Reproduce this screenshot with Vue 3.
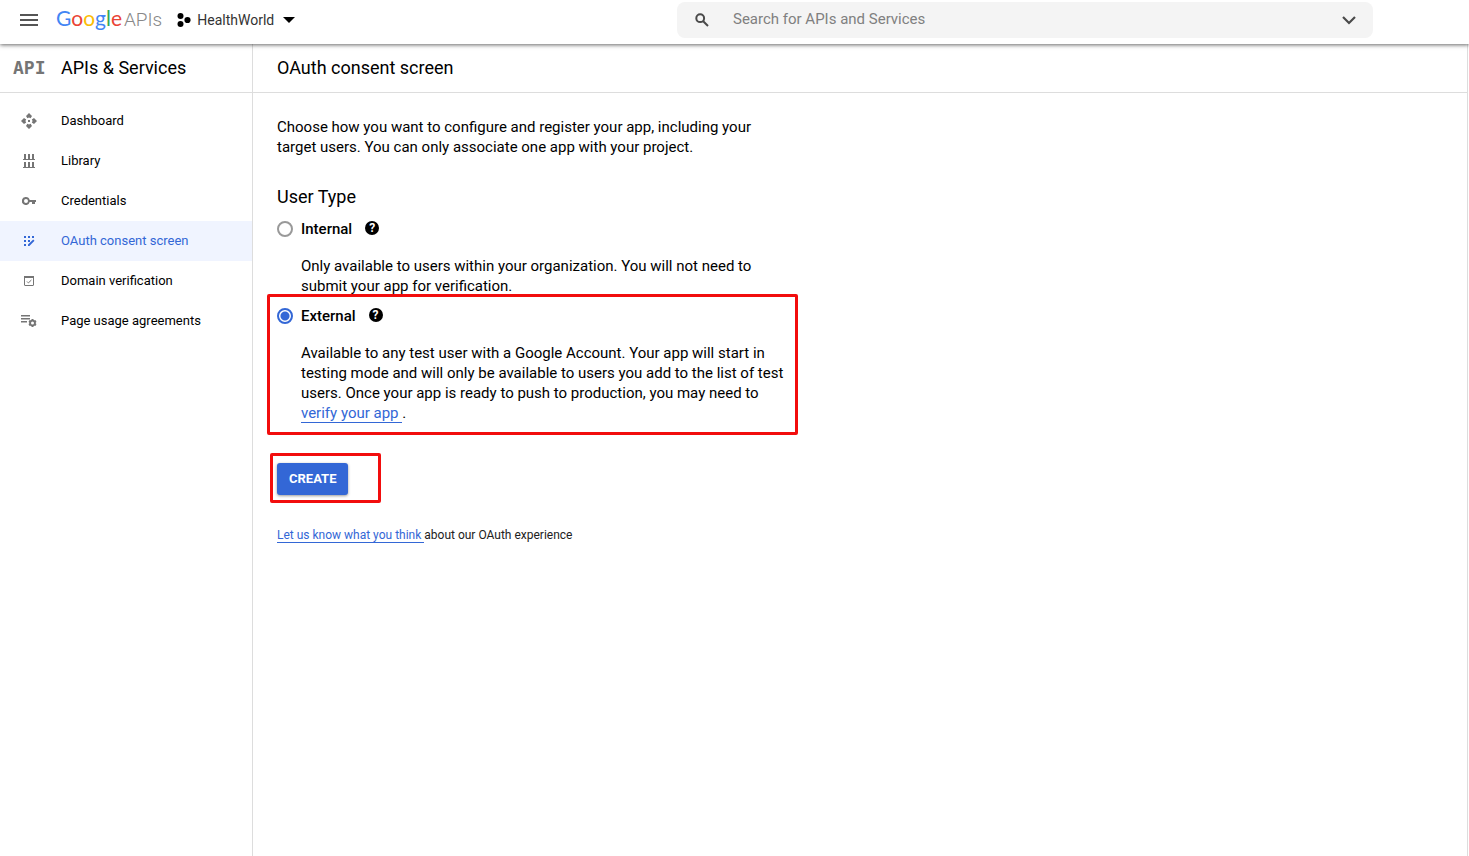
<script setup>
import { ref } from 'vue'

const userType = ref('external')
const query = ref('')
const nav = [
  { id: 'dashboard', label: 'Dashboard' },
  { id: 'library', label: 'Library' },
  { id: 'credentials', label: 'Credentials' },
  { id: 'consent', label: 'OAuth consent screen' },
  { id: 'domain', label: 'Domain verification' },
  { id: 'agreements', label: 'Page usage agreements' },
]
const active = ref('consent')
</script>

<template>
  <div class="page">
    <header class="topbar">
      <div class="brand">
        <button class="icon-btn menu" type="button" aria-label="Main menu">
          <svg width="18" height="12" viewBox="0 0 18 12"><path d="M0 0h18v2H0zM0 5h18v2H0zM0 10h18v2H0z" /></svg>
        </button>
        <a class="logo" href="#"><span class="google"><span class="b">G</span><span class="r">o</span><span class="y">o</span><span class="b">g</span><span class="g">l</span><span class="r">e</span></span><span class="apis">APIs</span></a>
        <button class="project" type="button">
          <svg width="14" height="14" viewBox="0 0 14 14"><circle cx="3.5" cy="3" r="3" /><circle cx="3.5" cy="11" r="3" /><circle cx="10.5" cy="7" r="3.1" /></svg>
          <span>HealthWorld</span>
          <svg class="caret" width="12" height="6" viewBox="0 0 12 6"><path d="M0 0h12L6 6z" /></svg>
        </button>
      </div>
      <form class="search" role="search" @submit.prevent>
        <svg width="14" height="14" viewBox="0 0 14 14" fill="none" stroke="#4a4a4a" stroke-width="2"><circle cx="5.2" cy="5.2" r="3.9" /><path d="M8.2 8.2l4.8 4.8" /></svg>
        <input v-model="query" type="text" aria-label="Search for APIs and Services" placeholder="Search for APIs and Services" />
        <button class="icon-btn" type="button" aria-label="Expand search">
          <svg width="14" height="9" viewBox="0 0 14 9" fill="none" stroke="#4a4a4a" stroke-width="2.2"><path d="M1 1l6 6 6-6" /></svg>
        </button>
      </form>
    </header>

    <div class="body">
      <aside class="sidebar">
        <div class="section-head">
          <span class="api-mark">API</span>
          <span>APIs &amp; Services</span>
        </div>
        <nav class="nav">
          <a v-for="item in nav" :key="item.id" href="#" :class="{ active: active === item.id }" @click.prevent="active = item.id">
            <span class="nav-icon">
              <svg v-if="item.id === 'dashboard'" width="16" height="16" viewBox="0 0 16 16"><path d="M8 0l3 3-1.400 2.200L8 4.400l-1.600.8L5 3zM8 16l3-3-1.400-2.200-1.600.8-1.600-.8L5 13zM0 8l3-3 2.200 1.400L4.400 8l.8 1.600L3 11zM16 8l-3-3-2.200 1.400.8 1.600-.8 1.600L13 11zM7 7h2v2H7z" /></svg>
              <svg v-else-if="item.id === 'library'" width="12" height="14" viewBox="0 0 12 14"><path d="M1 0h2v5h2V0h2v5h2V0h2v5h1v1H0V5h1zM1 8h2v5h2V8h2v5h2V8h2v5h1v1H0v-1h1z" /></svg>
              <svg v-else-if="item.id === 'credentials'" width="14" height="8" viewBox="0 0 14 8"><path d="M4 0a4 4 0 0 1 3.700 3H14v2h-1v2h-3V5H7.700A4 4 0 1 1 4 0zm0 2a2 2 0 1 0 0 4 2 2 0 0 0 0-4z" /></svg>
              <svg v-else-if="item.id === 'consent'" width="11" height="11" viewBox="0 0 11 11"><path d="M0 0h2v2H0zM4 0h2v2H4zM8 0h2v2H8zM0 4h2v2H0zM4 4h2v2H4zM0 8h2v2H0zM4 10V8.600L9.200 3.500l1.300 1.300L5.400 10z" /></svg>
              <svg v-else-if="item.id === 'domain'" width="10" height="10" viewBox="0 0 10 10" fill="none" stroke="currentColor"><rect x=".5" y=".5" width="9" height="9" rx=".5" /><path d="M0 1h10" stroke-width="2" /><path d="M3 5.500l1.400 1.400L7.400 4" /></svg>
              <svg v-else width="16" height="12" viewBox="0 0 16 12"><path d="M0 0h9v1.500H0zM0 3h9v1.500H0zM0 6h6v1.500H0z" /><circle cx="11.500" cy="8" r="2.400" fill="none" stroke="currentColor" stroke-width="1.800" /><path d="M10.500 4h2v1.600h-2zM10.500 10.400h2V12h-2zM7.500 6.900l1-1.800 1.400.8-1 1.800zM13.100 10.100l1-1.800 1.400.8-1 1.800zM7.500 9.100l1.400-.8 1 1.800-1.400.8zM13.100 5.900l1.400-.8 1 1.800-1.400.8z" /></svg>
            </span>
            <span>{{ item.label }}</span>
          </a>
        </nav>
      </aside>

      <main class="main">
        <h1 class="section-head">OAuth consent screen</h1>
        <div class="content">
          <p>Choose how you want to configure and register your app, including your target users. You can only associate one app with your project.</p>
          <h2>User Type</h2>
          <section class="option">
            <div class="option-row">
              <input id="type-internal" v-model="userType" type="radio" name="user-type" value="internal" />
              <label for="type-internal">Internal</label>
              <button class="help" type="button" aria-label="About internal user type">?</button>
            </div>
            <p>Only available to users within your organization. You will not need to submit your app for verification.</p>
          </section>
          <section class="option marked">
            <div class="option-row">
              <input id="type-external" v-model="userType" type="radio" name="user-type" value="external" />
              <label for="type-external">External</label>
              <button class="help" type="button" aria-label="About external user type">?</button>
            </div>
            <p>Available to any test user with a Google Account. Your app will start in testing mode and will only be available to users you add to the list of test users. Once your app is ready to push to production, you may need to <a class="link" href="#">verify your app&nbsp;</a>.</p>
          </section>
          <div class="action marked">
            <button class="create" type="button">CREATE</button>
          </div>
          <p class="feedback"><a class="link" href="#">Let us know what you think&nbsp;</a>about our OAuth experience</p>
        </div>
      </main>
    </div>
  </div>
</template>

<style>
body {
  margin: 0;
  background: #fff;
}
</style>

<style scoped>
.page {
  display: flex;
  flex-direction: column;
  min-height: 100vh;
  font: 400 15px/20px Roboto, sans-serif;
  color: #000;
}
button {
  padding: 0;
  border: 0;
  background: none;
  font: inherit;
  color: inherit;
  cursor: pointer;
}
a {
  text-decoration: none;
  color: inherit;
}
svg {
  display: block;
  flex: none;
}
svg:not([fill]) {
  fill: currentColor;
}
p,
h1,
h2 {
  margin: 0;
  font-weight: 400;
}
.topbar {
  position: relative;
  display: flex;
  height: 44px;
  background: #fff;
  box-shadow: 0 1px 4px rgba(0, 0, 0, 0.6);
}
.brand {
  display: flex;
  align-items: center;
  flex: 0 0 657px;
  height: 40px;
  padding-left: 20px;
}
.brand .menu {
  height: 14px;
}
.icon-btn {
  color: #555;
}
.logo {
  display: flex;
  align-items: baseline;
  gap: 2px;
  height: 32px;
  margin-left: 18px;
}
.google {
  font: 400 21px/28px Lato, sans-serif;
}
.apis {
  font-size: 19px;
  font-weight: 300;
  color: #888;
}
.b { color: #4285f4; }
.r { color: #ea4335; }
.y { color: #fbbc05; }
.g { color: #34a853; }
.project {
  display: flex;
  align-items: center;
  gap: 6px;
  margin-left: 15px;
  font-size: 14px;
}
.project span {
  color: #333;
}
.caret {
  margin-left: 3px;
}
.search {
  display: flex;
  align-items: center;
  flex: 1;
  height: 36px;
  margin: 2px 96px 0 0;
  padding: 0 17px 0 18px;
  border-radius: 8px;
  background: #f4f4f4;
}
.search input {
  flex: 1;
  min-width: 0;
  margin-left: 24px;
  padding: 0 0 2px;
  border: 0;
  outline: 0;
  background: none;
  font: inherit;
}
.search input::placeholder {
  color: #808080;
  opacity: 1;
}
.body {
  display: flex;
  flex: 1;
}
.sidebar {
  flex: 0 0 252px;
  border-right: 1px solid #ddd;
}
.section-head {
  display: flex;
  align-items: center;
  height: 48px;
  border-bottom: 1px solid #ddd;
  font-size: 18px;
  line-height: 24px;
}
.api-mark {
  width: 48px;
  padding-left: 13px;
  box-sizing: border-box;
  margin-right: 13px;
  font: 700 18px/24px "DejaVu Sans Mono", monospace;
  color: #757575;
}
.nav {
  padding-top: 8px;
}
.nav a {
  display: flex;
  align-items: center;
  height: 40px;
  font-size: 13px;
}
.nav-icon {
  display: flex;
  justify-content: center;
  width: 58px;
  margin-right: 3px;
  color: #757575;
}
.nav a.active,
.nav a.active .nav-icon {
  color: #3367d6;
}
.nav a.active {
  background: #f0f4ff;
}
.main {
  flex: 1;
  margin-right: 1px;
  border-right: 1px solid #ddd;
}
h1.section-head {
  padding-left: 24px;
}
.content {
  max-width: 511px;
  padding: 24px;
}
h2 {
  margin-top: 28px;
  font-size: 18px;
  line-height: 24px;
}
.option {
  margin-top: 8px;
}
.option-row {
  display: flex;
  align-items: center;
  height: 24px;
}
.option-row input {
  appearance: none;
  width: 16px;
  height: 16px;
  margin: 0 8px 0 0;
  border: 2px solid #999;
  border-radius: 50%;
}
.option-row input:checked {
  border-color: #3367d6;
  background: radial-gradient(circle, #3367d6 4px, #fff 5px);
}
.option-row label {
  font-weight: 500;
}
.help {
  width: 14px;
  height: 14px;
  margin: 0 0 2px 13px;
  border-radius: 50%;
  background: #000;
  color: #fff;
  font-size: 12px;
  font-weight: 700;
  line-height: 14px;
}
.option p {
  margin: 15px 0 0 24px;
}
.link {
  color: #3367d6;
  border-bottom: 1px solid #3367d6;
}
.marked {
  position: relative;
}
.marked::after {
  content: "";
  position: absolute;
  inset: -10px -10px -12px;
  border: 3px solid #f20d0d;
  border-radius: 2px;
  pointer-events: none;
}
.action {
  width: max-content;
  margin-top: 40px;
}
.action::after {
  inset: -10px -33px -8px -7px;
}
.create {
  display: block;
  height: 32px;
  padding: 0 12px;
  border-radius: 3px;
  background: #3367d6;
  box-shadow: 0 1px 3px rgba(0, 0, 0, 0.4);
  color: #fff;
  font-size: 13px;
  font-weight: 700;
}
.feedback {
  margin-top: 30px;
  font-size: 12px;
  color: #212121;
}
</style>
